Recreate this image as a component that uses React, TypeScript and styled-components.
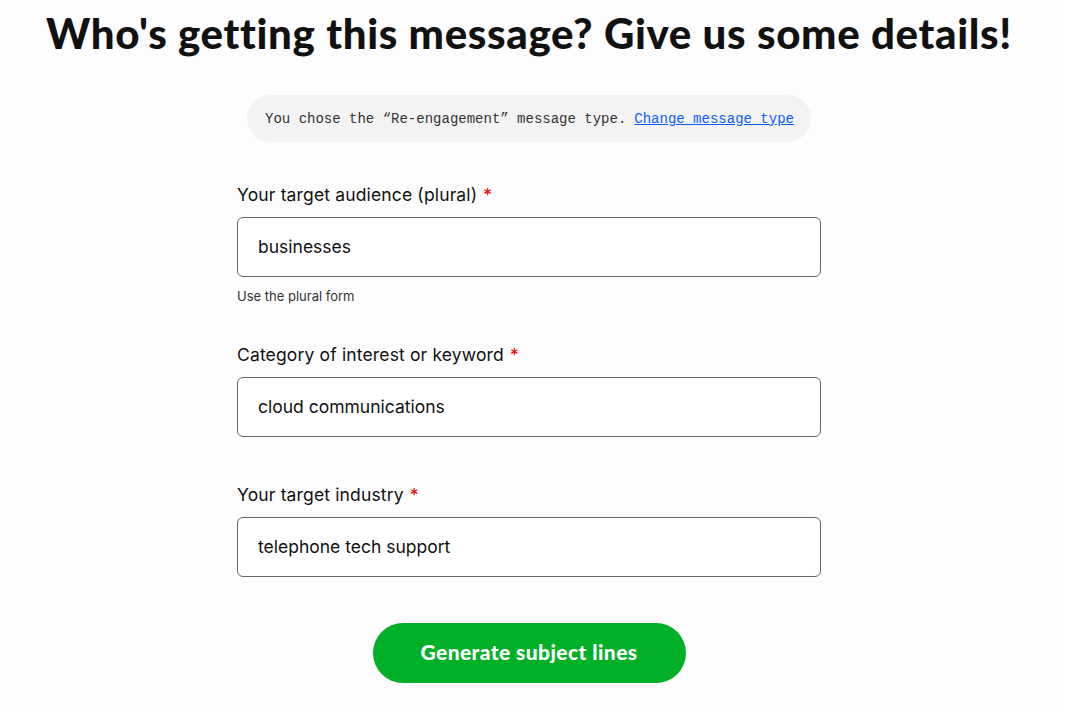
import React from "react";
import styled, { createGlobalStyle } from "styled-components";

const Global = createGlobalStyle`
  html, body { margin: 0; padding: 0; background: #fdfdfd; }
  body { font-family: "Lato", "Noto Sans", sans-serif; color: #111; }
  * { box-sizing: border-box; }
`;

const Page = styled.main`
  width: 1058px;
  display: flex;
  flex-direction: column;
  align-items: center;
  padding-top: 8px;
`;

const Title = styled.h1`
  margin: 0;
  font-family: "Lato", sans-serif;
  font-weight: 900;
  font-size: 42px;
  line-height: 50px;
  letter-spacing: 0.65px;
  color: #111;
  text-align: center;
  white-space: nowrap;
`;

const Notice = styled.div`
  margin-top: 37px;
  height: 47px;
  display: flex;
  align-items: center;
  padding: 0 17px 0 18px;
  background: #f3f3f3;
  border-radius: 24px;
  font-family: "Liberation Mono", monospace;
  font-size: 14px;
  color: #333;
`;

const Link = styled.a`
  color: #0b5cff;
  text-decoration: underline;
  margin-left: 8px;
  cursor: pointer;
`;

const Form = styled.form`
  width: 584px;
  margin-top: 41px;
  display: flex;
  flex-direction: column;
  gap: 46px;
`;

const Field = styled.div`
  display: flex;
  flex-direction: column;
`;

const Label = styled.label`
  font-family: "Inter", sans-serif;
  font-size: 17.5px;
  line-height: 24px;
  letter-spacing: 0.15px;
  color: #111;
  margin-bottom: 10px;
`;

const Required = styled.span`
  color: #e00;
  margin-left: 6px;
`;

const Input = styled.input`
  height: 60px;
  width: 100%;
  border: 1px solid #666;
  border-radius: 6px;
  background: #fff;
  padding: 0 20px 2px;
  font-family: "Inter", sans-serif;
  font-size: 17.5px;
  color: #111;
  outline: none;
`;

const Hint = styled.div`
  font-family: "Inter", sans-serif;
  font-size: 13px;
  line-height: 16px;
  color: #333;
  margin: 11px 0 -7px;
`;

const Submit = styled.button`
  margin-top: 46px;
  width: 313px;
  height: 60px;
  padding: 0 0 4px;
  border: none;
  border-radius: 30px;
  background: #00b026;
  color: #fff;
  font-family: "Lato", sans-serif;
  font-weight: 900;
  font-size: 21px;
  letter-spacing: 0.4px;
  cursor: pointer;
`;

const fields = [
  { label: "Your target audience (plural)", value: "businesses", hint: "Use the plural form" },
  { label: "Category of interest or keyword", value: "cloud communications" },
  { label: "Your target industry", value: "telephone tech support" },
];

export default function App() {
  return (
    <>
      <Global />
      <Page>
        <Title>Who's getting this message? Give us some details!</Title>
        <Notice>
          You chose the “Re-engagement” message type.
          <Link>Change message type</Link>
        </Notice>
        <Form onSubmit={(e) => e.preventDefault()}>
          {fields.map((f) => (
            <Field key={f.label}>
              <Label>
                {f.label}
                <Required>*</Required>
              </Label>
              <Input defaultValue={f.value} />
              {f.hint && <Hint>{f.hint}</Hint>}
            </Field>
          ))}
        </Form>
        <Submit type="button">Generate subject lines</Submit>
      </Page>
    </>
  );
}
